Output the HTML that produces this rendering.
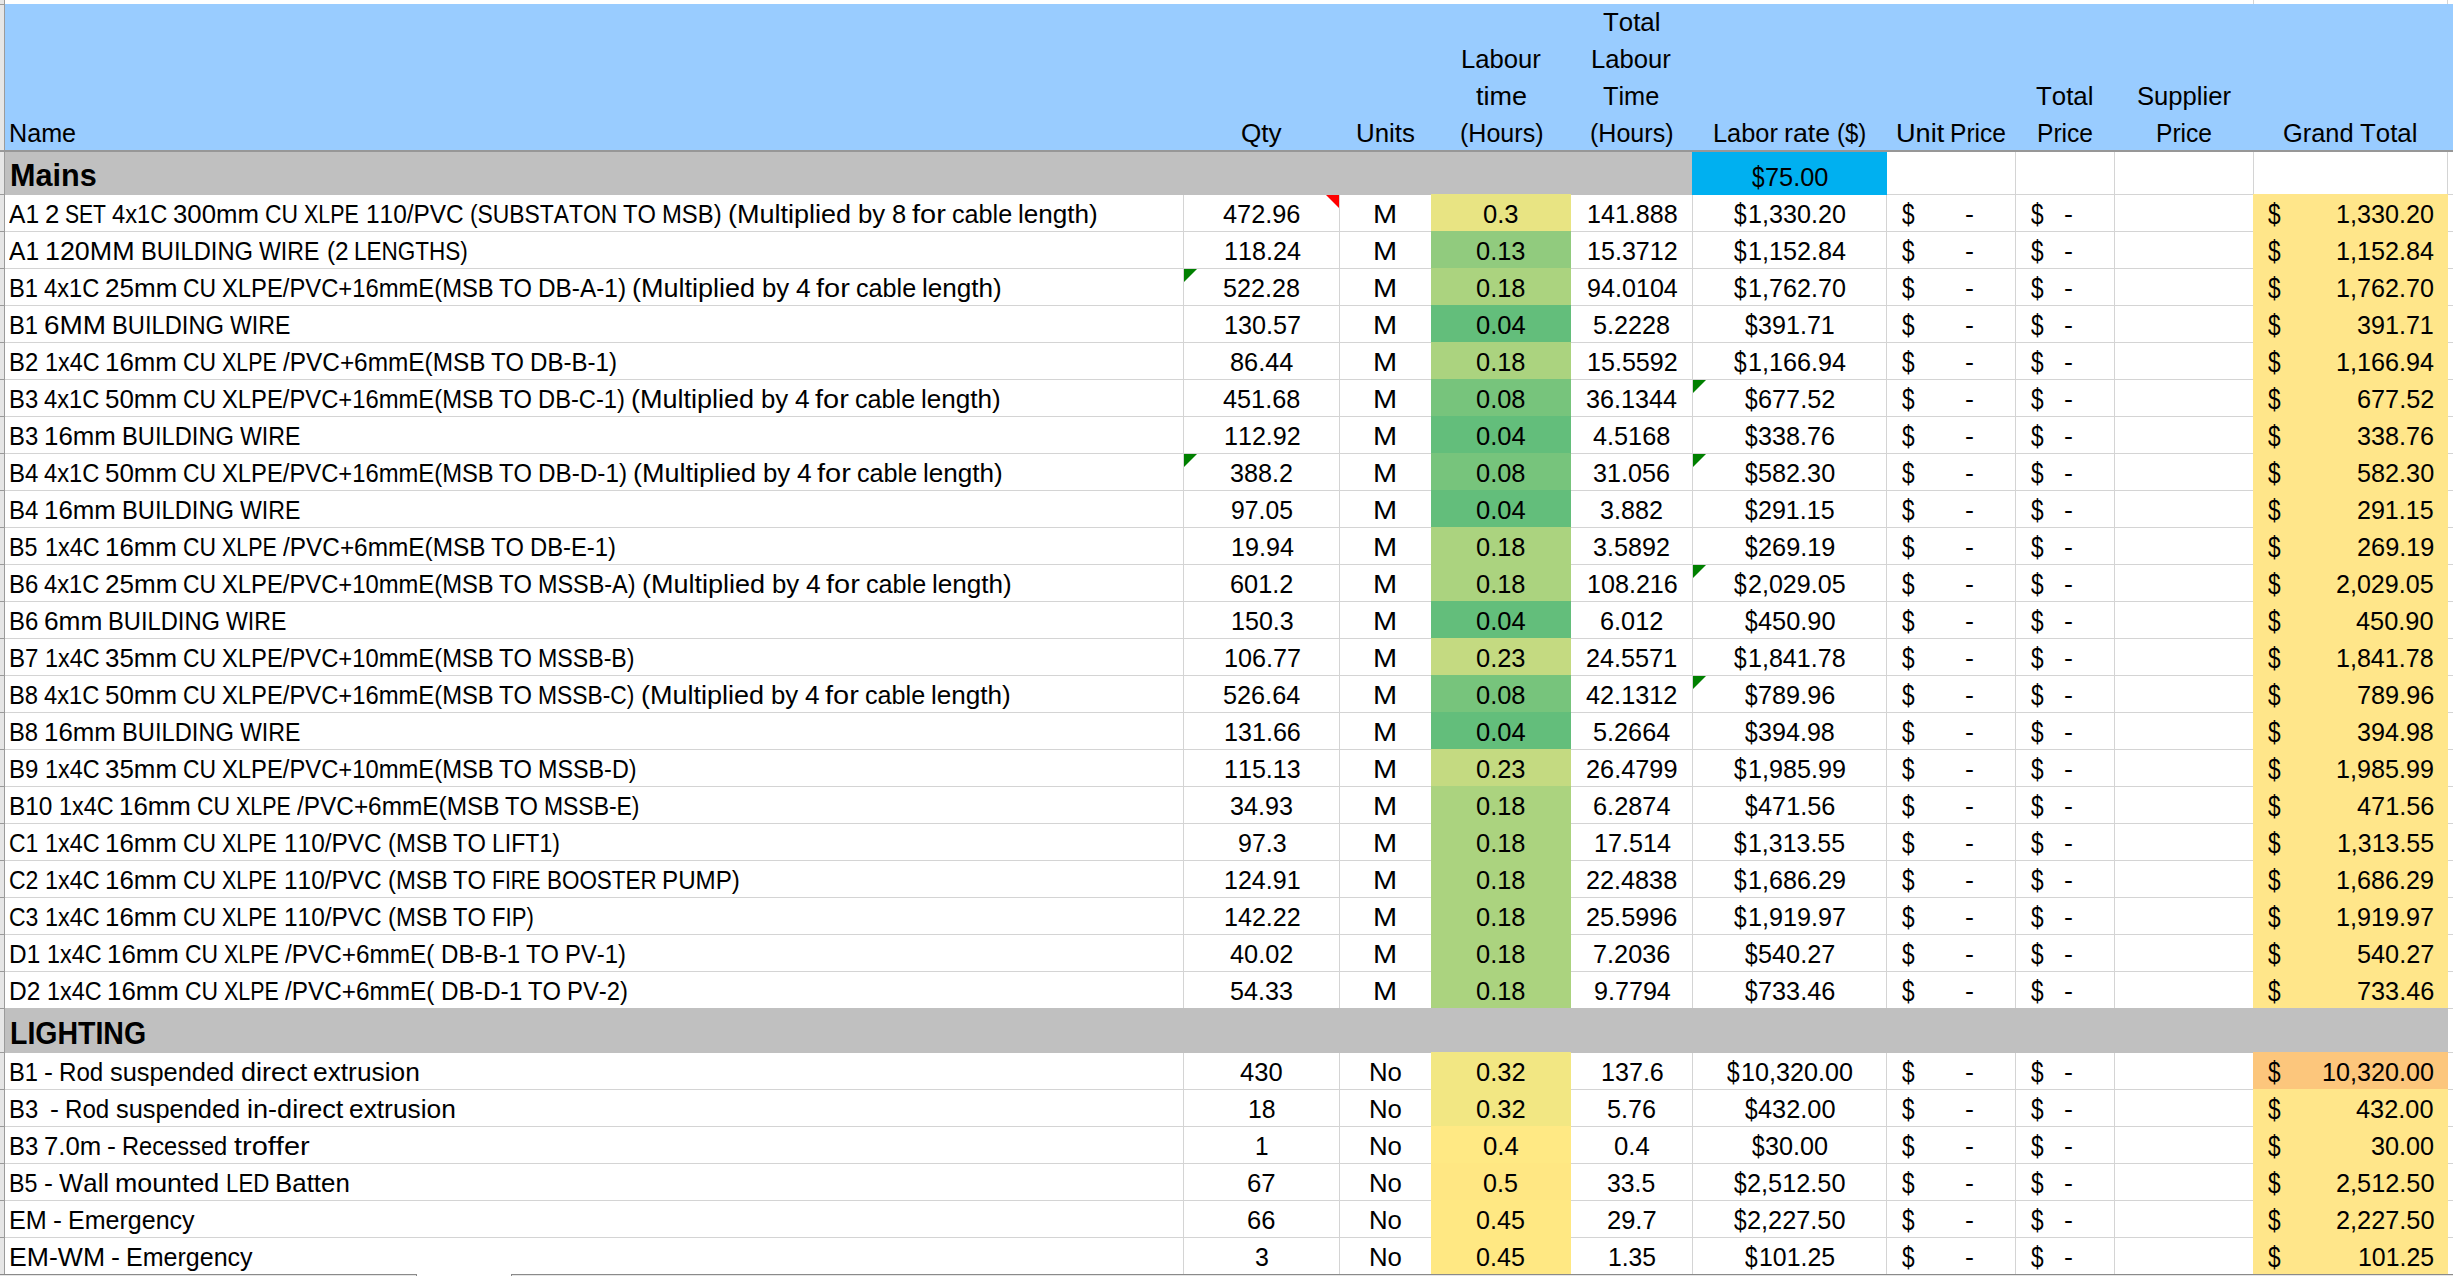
<!DOCTYPE html><html><head><meta charset="utf-8"><style>
html,body{margin:0;padding:0;}body{width:2453px;height:1276px;overflow:hidden;position:relative;background:#fff;font-family:"Liberation Sans",sans-serif;color:#000}
.r{position:absolute}
.t{position:absolute;white-space:pre;font-kerning:none;font-variant-ligatures:none;font-size:25.5px;line-height:40px;height:40px;transform-origin:0 0}
.b{font-weight:bold;font-size:30.5px}
.tri{position:absolute;width:0;height:0}
</style></head><body>
<div class="r" style="left:0px;top:0px;width:4px;height:1276px;background:#e6e6e6"></div>
<div class="r" style="left:4px;top:0px;width:1px;height:1276px;background:#9b9b9b"></div>
<div class="r" style="left:5px;top:4px;width:2448px;height:146px;background:#99ccff"></div>
<div class="r" style="left:0px;top:150px;width:2453px;height:2px;background:#979797"></div>
<div class="r" style="left:1183px;top:152px;width:1px;height:1124px;background:#d4d4d4"></div>
<div class="r" style="left:1339px;top:152px;width:1px;height:1124px;background:#d4d4d4"></div>
<div class="r" style="left:1431px;top:152px;width:1px;height:1124px;background:#d4d4d4"></div>
<div class="r" style="left:1570px;top:152px;width:1px;height:1124px;background:#d4d4d4"></div>
<div class="r" style="left:1692px;top:152px;width:1px;height:1124px;background:#d4d4d4"></div>
<div class="r" style="left:1886px;top:152px;width:1px;height:1124px;background:#d4d4d4"></div>
<div class="r" style="left:2015px;top:152px;width:1px;height:1124px;background:#d4d4d4"></div>
<div class="r" style="left:2114px;top:152px;width:1px;height:1124px;background:#d4d4d4"></div>
<div class="r" style="left:2253px;top:152px;width:1px;height:1124px;background:#d4d4d4"></div>
<div class="r" style="left:2447px;top:152px;width:1px;height:1124px;background:#d4d4d4"></div>
<div class="r" style="left:2253px;top:0px;width:1px;height:4px;background:#d4d4d4"></div>
<div class="r" style="left:2447px;top:0px;width:1px;height:4px;background:#d4d4d4"></div>
<div class="r" style="left:5px;top:194px;width:2448px;height:1px;background:#d4d4d4"></div>
<div class="r" style="left:5px;top:231px;width:2448px;height:1px;background:#d4d4d4"></div>
<div class="r" style="left:5px;top:268px;width:2448px;height:1px;background:#d4d4d4"></div>
<div class="r" style="left:5px;top:305px;width:2448px;height:1px;background:#d4d4d4"></div>
<div class="r" style="left:5px;top:342px;width:2448px;height:1px;background:#d4d4d4"></div>
<div class="r" style="left:5px;top:379px;width:2448px;height:1px;background:#d4d4d4"></div>
<div class="r" style="left:5px;top:416px;width:2448px;height:1px;background:#d4d4d4"></div>
<div class="r" style="left:5px;top:453px;width:2448px;height:1px;background:#d4d4d4"></div>
<div class="r" style="left:5px;top:490px;width:2448px;height:1px;background:#d4d4d4"></div>
<div class="r" style="left:5px;top:527px;width:2448px;height:1px;background:#d4d4d4"></div>
<div class="r" style="left:5px;top:564px;width:2448px;height:1px;background:#d4d4d4"></div>
<div class="r" style="left:5px;top:601px;width:2448px;height:1px;background:#d4d4d4"></div>
<div class="r" style="left:5px;top:638px;width:2448px;height:1px;background:#d4d4d4"></div>
<div class="r" style="left:5px;top:675px;width:2448px;height:1px;background:#d4d4d4"></div>
<div class="r" style="left:5px;top:712px;width:2448px;height:1px;background:#d4d4d4"></div>
<div class="r" style="left:5px;top:749px;width:2448px;height:1px;background:#d4d4d4"></div>
<div class="r" style="left:5px;top:786px;width:2448px;height:1px;background:#d4d4d4"></div>
<div class="r" style="left:5px;top:823px;width:2448px;height:1px;background:#d4d4d4"></div>
<div class="r" style="left:5px;top:860px;width:2448px;height:1px;background:#d4d4d4"></div>
<div class="r" style="left:5px;top:897px;width:2448px;height:1px;background:#d4d4d4"></div>
<div class="r" style="left:5px;top:934px;width:2448px;height:1px;background:#d4d4d4"></div>
<div class="r" style="left:5px;top:971px;width:2448px;height:1px;background:#d4d4d4"></div>
<div class="r" style="left:5px;top:1008px;width:2448px;height:1px;background:#d4d4d4"></div>
<div class="r" style="left:5px;top:1052px;width:2448px;height:1px;background:#d4d4d4"></div>
<div class="r" style="left:5px;top:1089px;width:2448px;height:1px;background:#d4d4d4"></div>
<div class="r" style="left:5px;top:1126px;width:2448px;height:1px;background:#d4d4d4"></div>
<div class="r" style="left:5px;top:1163px;width:2448px;height:1px;background:#d4d4d4"></div>
<div class="r" style="left:5px;top:1200px;width:2448px;height:1px;background:#d4d4d4"></div>
<div class="r" style="left:5px;top:1237px;width:2448px;height:1px;background:#d4d4d4"></div>
<div class="r" style="left:5px;top:1274px;width:2448px;height:1px;background:#d4d4d4"></div>
<div class="r" style="left:0;top:4px;width:4px;height:1px;background:#9b9b9b"></div>
<div class="r" style="left:0;top:150px;width:4px;height:1px;background:#9b9b9b"></div>
<div class="r" style="left:0;top:194px;width:4px;height:1px;background:#9b9b9b"></div>
<div class="r" style="left:0;top:231px;width:4px;height:1px;background:#9b9b9b"></div>
<div class="r" style="left:0;top:268px;width:4px;height:1px;background:#9b9b9b"></div>
<div class="r" style="left:0;top:305px;width:4px;height:1px;background:#9b9b9b"></div>
<div class="r" style="left:0;top:342px;width:4px;height:1px;background:#9b9b9b"></div>
<div class="r" style="left:0;top:379px;width:4px;height:1px;background:#9b9b9b"></div>
<div class="r" style="left:0;top:416px;width:4px;height:1px;background:#9b9b9b"></div>
<div class="r" style="left:0;top:453px;width:4px;height:1px;background:#9b9b9b"></div>
<div class="r" style="left:0;top:490px;width:4px;height:1px;background:#9b9b9b"></div>
<div class="r" style="left:0;top:527px;width:4px;height:1px;background:#9b9b9b"></div>
<div class="r" style="left:0;top:564px;width:4px;height:1px;background:#9b9b9b"></div>
<div class="r" style="left:0;top:601px;width:4px;height:1px;background:#9b9b9b"></div>
<div class="r" style="left:0;top:638px;width:4px;height:1px;background:#9b9b9b"></div>
<div class="r" style="left:0;top:675px;width:4px;height:1px;background:#9b9b9b"></div>
<div class="r" style="left:0;top:712px;width:4px;height:1px;background:#9b9b9b"></div>
<div class="r" style="left:0;top:749px;width:4px;height:1px;background:#9b9b9b"></div>
<div class="r" style="left:0;top:786px;width:4px;height:1px;background:#9b9b9b"></div>
<div class="r" style="left:0;top:823px;width:4px;height:1px;background:#9b9b9b"></div>
<div class="r" style="left:0;top:860px;width:4px;height:1px;background:#9b9b9b"></div>
<div class="r" style="left:0;top:897px;width:4px;height:1px;background:#9b9b9b"></div>
<div class="r" style="left:0;top:934px;width:4px;height:1px;background:#9b9b9b"></div>
<div class="r" style="left:0;top:971px;width:4px;height:1px;background:#9b9b9b"></div>
<div class="r" style="left:0;top:1008px;width:4px;height:1px;background:#9b9b9b"></div>
<div class="r" style="left:0;top:1052px;width:4px;height:1px;background:#9b9b9b"></div>
<div class="r" style="left:0;top:1089px;width:4px;height:1px;background:#9b9b9b"></div>
<div class="r" style="left:0;top:1126px;width:4px;height:1px;background:#9b9b9b"></div>
<div class="r" style="left:0;top:1163px;width:4px;height:1px;background:#9b9b9b"></div>
<div class="r" style="left:0;top:1200px;width:4px;height:1px;background:#9b9b9b"></div>
<div class="r" style="left:0;top:1237px;width:4px;height:1px;background:#9b9b9b"></div>
<div class="r" style="left:0;top:1274px;width:4px;height:1px;background:#9b9b9b"></div>
<div class="r" style="left:5px;top:152px;width:1688px;height:43px;background:#c0c0c0"></div>
<div class="r" style="left:1692px;top:152px;width:195px;height:43px;background:#00b0f0"></div>
<div class="r" style="left:1431px;top:194px;width:140px;height:38px;background:#e8e483"></div>
<div class="r" style="left:2253px;top:194px;width:195px;height:38px;background:#ffe68a"></div>
<div class="r" style="left:1431px;top:231px;width:140px;height:38px;background:#91cb7e"></div>
<div class="r" style="left:2253px;top:231px;width:195px;height:38px;background:#ffe68a"></div>
<div class="r" style="left:1431px;top:268px;width:140px;height:38px;background:#abd37f"></div>
<div class="r" style="left:2253px;top:268px;width:195px;height:38px;background:#ffe68a"></div>
<div class="r" style="left:1431px;top:305px;width:140px;height:38px;background:#63be7b"></div>
<div class="r" style="left:2253px;top:305px;width:195px;height:38px;background:#ffe68a"></div>
<div class="r" style="left:1431px;top:342px;width:140px;height:38px;background:#abd37f"></div>
<div class="r" style="left:2253px;top:342px;width:195px;height:38px;background:#ffe68a"></div>
<div class="r" style="left:1431px;top:379px;width:140px;height:38px;background:#77c47c"></div>
<div class="r" style="left:2253px;top:379px;width:195px;height:38px;background:#ffe68a"></div>
<div class="r" style="left:1431px;top:416px;width:140px;height:38px;background:#63be7b"></div>
<div class="r" style="left:2253px;top:416px;width:195px;height:38px;background:#ffe68a"></div>
<div class="r" style="left:1431px;top:453px;width:140px;height:38px;background:#77c47c"></div>
<div class="r" style="left:2253px;top:453px;width:195px;height:38px;background:#ffe68a"></div>
<div class="r" style="left:1431px;top:490px;width:140px;height:38px;background:#63be7b"></div>
<div class="r" style="left:2253px;top:490px;width:195px;height:38px;background:#ffe68a"></div>
<div class="r" style="left:1431px;top:527px;width:140px;height:38px;background:#abd37f"></div>
<div class="r" style="left:2253px;top:527px;width:195px;height:38px;background:#ffe68a"></div>
<div class="r" style="left:1431px;top:564px;width:140px;height:38px;background:#abd37f"></div>
<div class="r" style="left:2253px;top:564px;width:195px;height:38px;background:#ffe68a"></div>
<div class="r" style="left:1431px;top:601px;width:140px;height:38px;background:#63be7b"></div>
<div class="r" style="left:2253px;top:601px;width:195px;height:38px;background:#ffe68a"></div>
<div class="r" style="left:1431px;top:638px;width:140px;height:38px;background:#c4da81"></div>
<div class="r" style="left:2253px;top:638px;width:195px;height:38px;background:#ffe68a"></div>
<div class="r" style="left:1431px;top:675px;width:140px;height:38px;background:#77c47c"></div>
<div class="r" style="left:2253px;top:675px;width:195px;height:38px;background:#ffe68a"></div>
<div class="r" style="left:1431px;top:712px;width:140px;height:38px;background:#63be7b"></div>
<div class="r" style="left:2253px;top:712px;width:195px;height:38px;background:#ffe68a"></div>
<div class="r" style="left:1431px;top:749px;width:140px;height:38px;background:#c4da81"></div>
<div class="r" style="left:2253px;top:749px;width:195px;height:38px;background:#ffe68a"></div>
<div class="r" style="left:1431px;top:786px;width:140px;height:38px;background:#abd37f"></div>
<div class="r" style="left:2253px;top:786px;width:195px;height:38px;background:#ffe68a"></div>
<div class="r" style="left:1431px;top:823px;width:140px;height:38px;background:#abd37f"></div>
<div class="r" style="left:2253px;top:823px;width:195px;height:38px;background:#ffe68a"></div>
<div class="r" style="left:1431px;top:860px;width:140px;height:38px;background:#abd37f"></div>
<div class="r" style="left:2253px;top:860px;width:195px;height:38px;background:#ffe68a"></div>
<div class="r" style="left:1431px;top:897px;width:140px;height:38px;background:#abd37f"></div>
<div class="r" style="left:2253px;top:897px;width:195px;height:38px;background:#ffe68a"></div>
<div class="r" style="left:1431px;top:934px;width:140px;height:38px;background:#abd37f"></div>
<div class="r" style="left:2253px;top:934px;width:195px;height:38px;background:#ffe68a"></div>
<div class="r" style="left:1431px;top:971px;width:140px;height:38px;background:#abd37f"></div>
<div class="r" style="left:2253px;top:971px;width:195px;height:38px;background:#ffe68a"></div>
<div class="r" style="left:5px;top:1008px;width:2443px;height:45px;background:#c0c0c0"></div>
<div class="r" style="left:1431px;top:1052px;width:140px;height:38px;background:#f2e783"></div>
<div class="r" style="left:2253px;top:1052px;width:195px;height:38px;background:#fcc67c"></div>
<div class="r" style="left:1431px;top:1089px;width:140px;height:38px;background:#f2e783"></div>
<div class="r" style="left:2253px;top:1089px;width:195px;height:38px;background:#ffe68a"></div>
<div class="r" style="left:1431px;top:1126px;width:140px;height:38px;background:#ffe984"></div>
<div class="r" style="left:2253px;top:1126px;width:195px;height:38px;background:#ffe68a"></div>
<div class="r" style="left:1431px;top:1163px;width:140px;height:38px;background:#ffe783"></div>
<div class="r" style="left:2253px;top:1163px;width:195px;height:38px;background:#ffe68a"></div>
<div class="r" style="left:1431px;top:1200px;width:140px;height:38px;background:#ffe883"></div>
<div class="r" style="left:2253px;top:1200px;width:195px;height:38px;background:#ffe68a"></div>
<div class="r" style="left:1431px;top:1237px;width:140px;height:38px;background:#ffe883"></div>
<div class="r" style="left:2253px;top:1237px;width:195px;height:38px;background:#ffe68a"></div>
<div class="r" style="left:0;top:1274px;width:417px;height:1px;background:#8a8a8a"></div>
<div class="r" style="left:511px;top:1274px;width:1942px;height:1px;background:#8a8a8a"></div>
<div class="r" style="left:0;top:1275px;width:417px;height:1px;background:#e6e6e6"></div>
<div class="r" style="left:511px;top:1275px;width:1942px;height:1px;background:#e6e6e6"></div>
<div class="r" style="left:417px;top:1274px;width:94px;height:2px;background:#fff"></div>
<div class="r" style="left:416px;top:1274px;width:1px;height:2px;background:#8a8a8a"></div>
<div class="r" style="left:511px;top:1274px;width:1px;height:2px;background:#8a8a8a"></div>
<div class="tri" style="left:1326px;top:195px;border-top:13px solid #ff0000;border-left:13px solid transparent"></div>
<div class="tri" style="left:1184px;top:269px;border-top:13px solid #008000;border-right:13px solid transparent"></div>
<div class="tri" style="left:1184px;top:454px;border-top:13px solid #008000;border-right:13px solid transparent"></div>
<div class="tri" style="left:1693px;top:380px;border-top:13px solid #008000;border-right:13px solid transparent"></div>
<div class="tri" style="left:1693px;top:454px;border-top:13px solid #008000;border-right:13px solid transparent"></div>
<div class="tri" style="left:1693px;top:565px;border-top:13px solid #008000;border-right:13px solid transparent"></div>
<div class="tri" style="left:1693px;top:676px;border-top:13px solid #008000;border-right:13px solid transparent"></div>
<div class="t" style="left:8.96px;top:113.16px;transform:scaleX(0.9861)">Name</div>
<div class="t" style="left:1240.90px;top:113.16px;transform:scaleX(1.0244)">Qty</div>
<div class="t" style="left:1355.92px;top:113.16px;transform:scaleX(1.0160)">Units</div>
<div class="t" style="left:1460.78px;top:39.16px;transform:scaleX(1.0058)">Labour</div>
<div class="t" style="left:1475.56px;top:76.16px;transform:scaleX(1.0600)">time</div>
<div class="t" style="left:1459.50px;top:113.16px;transform:scaleX(0.9822)">(Hours)</div>
<div class="t" style="left:1602.75px;top:2.16px;transform:scaleX(1.0124)">Total</div>
<div class="t" style="left:1591.28px;top:39.16px;transform:scaleX(1.0058)">Labour</div>
<div class="t" style="left:1603.26px;top:76.16px;transform:scaleX(0.9933)">Time</div>
<div class="t" style="left:1590.00px;top:113.16px;transform:scaleX(0.9822)">(Hours)</div>
<div class="t" style="left:1712.81px;top:113.16px;transform:scaleX(0.9940)">Labor</div>
<div class="t" style="left:1784.01px;top:113.16px;transform:scaleX(1.0490)">rate</div>
<div class="t" style="left:1836.56px;top:113.16px;transform:scaleX(0.9424)">($)</div>
<div class="t" style="left:1895.82px;top:113.16px;transform:scaleX(1.0644)">Unit</div>
<div class="t" style="left:1949.99px;top:113.16px;transform:scaleX(0.9642)">Price</div>
<div class="t" style="left:2036.25px;top:76.16px;transform:scaleX(1.0124)">Total</div>
<div class="t" style="left:2036.99px;top:113.16px;transform:scaleX(0.9642)">Price</div>
<div class="t" style="left:2136.59px;top:76.16px;transform:scaleX(1.0053)">Supplier</div>
<div class="t" style="left:2155.99px;top:113.16px;transform:scaleX(0.9642)">Price</div>
<div class="t" style="left:2283.28px;top:113.16px;transform:scaleX(0.9962)">Grand</div>
<div class="t" style="left:2360.25px;top:113.16px;transform:scaleX(1.0124)">Total</div>
<div class="t b" style="left:9.96px;top:154.80px;transform:scaleX(1.0030)">Mains</div>
<div class="t" style="left:1751.79px;top:158.16px;transform-origin:0 28.84px;transform:scale(0.8882,1.163)">$</div>
<div class="t" style="left:1765.04px;top:157.16px;transform:scaleX(0.9938)">75.00</div>
<div class="t b" style="left:9.59px;top:1012.80px;transform:scaleX(0.9341)">LIGHTING</div>
<div class="t" style="left:9.06px;top:194.16px;transform:scaleX(0.9642)">A1</div>
<div class="t" style="left:44.96px;top:194.16px;transform:scaleX(1.0109)">2</div>
<div class="t" style="left:64.79px;top:194.16px;transform:scaleX(0.8268)">SET</div>
<div class="t" style="left:111.93px;top:194.16px;transform:scaleX(0.9298)">4x1C</div>
<div class="t" style="left:173.32px;top:194.16px;transform:scaleX(1.0109)">300mm</div>
<div class="t" style="left:264.75px;top:194.16px;transform:scaleX(0.8977)">CU</div>
<div class="t" style="left:303.67px;top:194.16px;transform:scaleX(0.8396)">XLPE</div>
<div class="t" style="left:365.56px;top:194.16px;transform:scaleX(0.9578)">110/PVC</div>
<div class="t" style="left:469.63px;top:194.16px;transform:scaleX(0.8962)">(SUBSTATON</div>
<div class="t" style="left:622.80px;top:194.16px;transform:scaleX(0.9289)">TO</div>
<div class="t" style="left:662.33px;top:194.16px;transform:scaleX(0.9347)">MSB)</div>
<div class="t" style="left:728.38px;top:194.16px;transform:scaleX(1.0594)">(Multiplied</div>
<div class="t" style="left:858.31px;top:194.16px;transform:scaleX(1.0109)">by</div>
<div class="t" style="left:892.01px;top:194.16px;transform:scaleX(0.9986)">8</div>
<div class="t" style="left:911.92px;top:194.16px;transform:scaleX(1.1350)">for</div>
<div class="t" style="left:951.87px;top:194.16px;transform:scaleX(0.9869)">cable</div>
<div class="t" style="left:1018.25px;top:194.16px;transform:scaleX(1.0236)">length)</div>
<div class="t" style="left:1222.90px;top:194.16px;transform:scaleX(0.9928)">472.96</div>
<div class="t" style="left:1373.41px;top:194.16px;transform:scaleX(1.1357)">M</div>
<div class="t" style="left:1483.23px;top:194.16px;transform:scaleX(1.0021)">0.3</div>
<div class="t" style="left:1586.51px;top:194.16px;transform:scaleX(0.9834)">141.888</div>
<div class="t" style="left:1734.29px;top:195.16px;transform-origin:0 28.84px;transform:scale(0.8882,1.163)">$</div>
<div class="t" style="left:1748.00px;top:194.16px;transform:scaleX(0.9868)">1,330.20</div>
<div class="t" style="left:1902.21px;top:195.16px;transform-origin:0 28.84px;transform:scale(0.8882,1.163)">$</div>
<div class="t" style="left:1965.28px;top:194.16px;transform:scaleX(1.0497)">-</div>
<div class="t" style="left:2031.21px;top:195.16px;transform-origin:0 28.84px;transform:scale(0.8882,1.163)">$</div>
<div class="t" style="left:2064.28px;top:194.16px;transform:scaleX(1.0497)">-</div>
<div class="t" style="left:2268.21px;top:195.16px;transform-origin:0 28.84px;transform:scale(0.8882,1.163)">$</div>
<div class="t" style="left:2336.04px;top:194.16px;transform:scaleX(0.9868)">1,330.20</div>
<div class="t" style="left:9.06px;top:231.16px;transform:scaleX(0.9642)">A1</div>
<div class="t" style="left:45.38px;top:231.16px;transform:scaleX(1.0524)">120MM</div>
<div class="t" style="left:141.02px;top:231.16px;transform:scaleX(0.9295)">BUILDING</div>
<div class="t" style="left:259.06px;top:231.16px;transform:scaleX(0.9077)">WIRE</div>
<div class="t" style="left:326.54px;top:231.16px;transform:scaleX(0.9567)">(2</div>
<div class="t" style="left:354.04px;top:231.16px;transform:scaleX(0.8826)">LENGTHS)</div>
<div class="t" style="left:1223.50px;top:231.16px;transform:scaleX(0.9867)">118.24</div>
<div class="t" style="left:1373.41px;top:231.16px;transform:scaleX(1.1357)">M</div>
<div class="t" style="left:1476.23px;top:231.16px;transform:scaleX(0.9976)">0.13</div>
<div class="t" style="left:1586.51px;top:231.16px;transform:scaleX(0.9846)">15.3712</div>
<div class="t" style="left:1734.29px;top:232.16px;transform-origin:0 28.84px;transform:scale(0.8882,1.163)">$</div>
<div class="t" style="left:1748.00px;top:231.16px;transform:scaleX(0.9869)">1,152.84</div>
<div class="t" style="left:1902.21px;top:232.16px;transform-origin:0 28.84px;transform:scale(0.8882,1.163)">$</div>
<div class="t" style="left:1965.28px;top:231.16px;transform:scaleX(1.0497)">-</div>
<div class="t" style="left:2031.21px;top:232.16px;transform-origin:0 28.84px;transform:scale(0.8882,1.163)">$</div>
<div class="t" style="left:2064.28px;top:231.16px;transform:scaleX(1.0497)">-</div>
<div class="t" style="left:2268.21px;top:232.16px;transform-origin:0 28.84px;transform:scale(0.8882,1.163)">$</div>
<div class="t" style="left:2335.78px;top:231.16px;transform:scaleX(0.9869)">1,152.84</div>
<div class="t" style="left:9.02px;top:268.16px;transform:scaleX(0.9322)">B1</div>
<div class="t" style="left:43.93px;top:268.16px;transform:scaleX(0.9298)">4x1C</div>
<div class="t" style="left:104.95px;top:268.16px;transform:scaleX(1.0211)">25mm</div>
<div class="t" style="left:182.75px;top:268.16px;transform:scaleX(0.8977)">CU</div>
<div class="t" style="left:221.62px;top:268.16px;transform:scaleX(0.9329)">XLPE/PVC+16mmE(MSB</div>
<div class="t" style="left:498.80px;top:268.16px;transform:scaleX(0.9289)">TO</div>
<div class="t" style="left:537.90px;top:268.16px;transform:scaleX(0.9562)">DB-A-1)</div>
<div class="t" style="left:632.38px;top:268.16px;transform:scaleX(1.0594)">(Multiplied</div>
<div class="t" style="left:762.31px;top:268.16px;transform:scaleX(1.0109)">by</div>
<div class="t" style="left:795.88px;top:268.16px;transform:scaleX(1.0310)">4</div>
<div class="t" style="left:815.92px;top:268.16px;transform:scaleX(1.1350)">for</div>
<div class="t" style="left:855.87px;top:268.16px;transform:scaleX(0.9869)">cable</div>
<div class="t" style="left:922.25px;top:268.16px;transform:scaleX(1.0236)">length)</div>
<div class="t" style="left:1223.26px;top:268.16px;transform:scaleX(0.9859)">522.28</div>
<div class="t" style="left:1373.41px;top:268.16px;transform:scaleX(1.1357)">M</div>
<div class="t" style="left:1476.23px;top:268.16px;transform:scaleX(0.9962)">0.18</div>
<div class="t" style="left:1586.61px;top:268.16px;transform:scaleX(0.9856)">94.0104</div>
<div class="t" style="left:1734.29px;top:269.16px;transform-origin:0 28.84px;transform:scale(0.8882,1.163)">$</div>
<div class="t" style="left:1748.00px;top:268.16px;transform:scaleX(0.9868)">1,762.70</div>
<div class="t" style="left:1902.21px;top:269.16px;transform-origin:0 28.84px;transform:scale(0.8882,1.163)">$</div>
<div class="t" style="left:1965.28px;top:268.16px;transform:scaleX(1.0497)">-</div>
<div class="t" style="left:2031.21px;top:269.16px;transform-origin:0 28.84px;transform:scale(0.8882,1.163)">$</div>
<div class="t" style="left:2064.28px;top:268.16px;transform:scaleX(1.0497)">-</div>
<div class="t" style="left:2268.21px;top:269.16px;transform-origin:0 28.84px;transform:scale(0.8882,1.163)">$</div>
<div class="t" style="left:2336.04px;top:268.16px;transform:scaleX(0.9868)">1,762.70</div>
<div class="t" style="left:9.02px;top:305.16px;transform:scaleX(0.9322)">B1</div>
<div class="t" style="left:43.84px;top:305.16px;transform:scaleX(1.0961)">6MM</div>
<div class="t" style="left:112.02px;top:305.16px;transform:scaleX(0.9295)">BUILDING</div>
<div class="t" style="left:230.06px;top:305.16px;transform:scaleX(0.9077)">WIRE</div>
<div class="t" style="left:1223.50px;top:305.16px;transform:scaleX(0.9880)">130.57</div>
<div class="t" style="left:1373.41px;top:305.16px;transform:scaleX(1.1357)">M</div>
<div class="t" style="left:1476.23px;top:305.16px;transform:scaleX(1.0024)">0.04</div>
<div class="t" style="left:1593.26px;top:305.16px;transform:scaleX(0.9859)">5.2228</div>
<div class="t" style="left:1744.79px;top:306.16px;transform-origin:0 28.84px;transform:scale(0.8882,1.163)">$</div>
<div class="t" style="left:1758.34px;top:305.16px;transform:scaleX(0.9849)">391.71</div>
<div class="t" style="left:1902.21px;top:306.16px;transform-origin:0 28.84px;transform:scale(0.8882,1.163)">$</div>
<div class="t" style="left:1965.28px;top:305.16px;transform:scaleX(1.0497)">-</div>
<div class="t" style="left:2031.21px;top:306.16px;transform-origin:0 28.84px;transform:scale(0.8882,1.163)">$</div>
<div class="t" style="left:2064.28px;top:305.16px;transform:scaleX(1.0497)">-</div>
<div class="t" style="left:2268.21px;top:306.16px;transform-origin:0 28.84px;transform:scale(0.8882,1.163)">$</div>
<div class="t" style="left:2357.41px;top:305.16px;transform:scaleX(0.9849)">391.71</div>
<div class="t" style="left:9.01px;top:342.16px;transform:scaleX(0.9359)">B2</div>
<div class="t" style="left:44.64px;top:342.16px;transform:scaleX(0.9178)">1x4C</div>
<div class="t" style="left:105.45px;top:342.16px;transform:scaleX(1.0139)">16mm</div>
<div class="t" style="left:182.75px;top:342.16px;transform:scaleX(0.8977)">CU</div>
<div class="t" style="left:221.67px;top:342.16px;transform:scaleX(0.8396)">XLPE</div>
<div class="t" style="left:282.84px;top:342.16px;transform:scaleX(0.9558)">/PVC+6mmE(MSB</div>
<div class="t" style="left:490.80px;top:342.16px;transform:scaleX(0.9289)">TO</div>
<div class="t" style="left:529.92px;top:342.16px;transform:scaleX(0.9448)">DB-B-1)</div>
<div class="t" style="left:1230.02px;top:342.16px;transform:scaleX(0.9943)">86.44</div>
<div class="t" style="left:1373.41px;top:342.16px;transform:scaleX(1.1357)">M</div>
<div class="t" style="left:1476.23px;top:342.16px;transform:scaleX(0.9962)">0.18</div>
<div class="t" style="left:1586.51px;top:342.16px;transform:scaleX(0.9846)">15.5592</div>
<div class="t" style="left:1734.29px;top:343.16px;transform-origin:0 28.84px;transform:scale(0.8882,1.163)">$</div>
<div class="t" style="left:1748.00px;top:342.16px;transform:scaleX(0.9869)">1,166.94</div>
<div class="t" style="left:1902.21px;top:343.16px;transform-origin:0 28.84px;transform:scale(0.8882,1.163)">$</div>
<div class="t" style="left:1965.28px;top:342.16px;transform:scaleX(1.0497)">-</div>
<div class="t" style="left:2031.21px;top:343.16px;transform-origin:0 28.84px;transform:scale(0.8882,1.163)">$</div>
<div class="t" style="left:2064.28px;top:342.16px;transform:scaleX(1.0497)">-</div>
<div class="t" style="left:2268.21px;top:343.16px;transform-origin:0 28.84px;transform:scale(0.8882,1.163)">$</div>
<div class="t" style="left:2335.78px;top:342.16px;transform:scaleX(0.9869)">1,166.94</div>
<div class="t" style="left:9.01px;top:379.16px;transform:scaleX(0.9349)">B3</div>
<div class="t" style="left:43.93px;top:379.16px;transform:scaleX(0.9298)">4x1C</div>
<div class="t" style="left:105.23px;top:379.16px;transform:scaleX(1.0170)">50mm</div>
<div class="t" style="left:182.75px;top:379.16px;transform:scaleX(0.8977)">CU</div>
<div class="t" style="left:221.62px;top:379.16px;transform:scaleX(0.9329)">XLPE/PVC+16mmE(MSB</div>
<div class="t" style="left:498.80px;top:379.16px;transform:scaleX(0.9289)">TO</div>
<div class="t" style="left:537.95px;top:379.16px;transform:scaleX(0.9300)">DB-C-1)</div>
<div class="t" style="left:631.38px;top:379.16px;transform:scaleX(1.0594)">(Multiplied</div>
<div class="t" style="left:761.31px;top:379.16px;transform:scaleX(1.0109)">by</div>
<div class="t" style="left:794.88px;top:379.16px;transform:scaleX(1.0310)">4</div>
<div class="t" style="left:814.92px;top:379.16px;transform:scaleX(1.1350)">for</div>
<div class="t" style="left:854.87px;top:379.16px;transform:scaleX(0.9869)">cable</div>
<div class="t" style="left:921.25px;top:379.16px;transform:scaleX(1.0236)">length)</div>
<div class="t" style="left:1222.90px;top:379.16px;transform:scaleX(0.9907)">451.68</div>
<div class="t" style="left:1373.41px;top:379.16px;transform:scaleX(1.1357)">M</div>
<div class="t" style="left:1476.23px;top:379.16px;transform:scaleX(0.9962)">0.08</div>
<div class="t" style="left:1586.34px;top:379.16px;transform:scaleX(0.9886)">36.1344</div>
<div class="t" style="left:1744.79px;top:380.16px;transform-origin:0 28.84px;transform:scale(0.8882,1.163)">$</div>
<div class="t" style="left:1757.97px;top:379.16px;transform:scaleX(0.9911)">677.52</div>
<div class="t" style="left:1902.21px;top:380.16px;transform-origin:0 28.84px;transform:scale(0.8882,1.163)">$</div>
<div class="t" style="left:1965.28px;top:379.16px;transform:scaleX(1.0497)">-</div>
<div class="t" style="left:2031.21px;top:380.16px;transform-origin:0 28.84px;transform:scale(0.8882,1.163)">$</div>
<div class="t" style="left:2064.28px;top:379.16px;transform:scaleX(1.0497)">-</div>
<div class="t" style="left:2268.21px;top:380.16px;transform-origin:0 28.84px;transform:scale(0.8882,1.163)">$</div>
<div class="t" style="left:2356.97px;top:379.16px;transform:scaleX(0.9911)">677.52</div>
<div class="t" style="left:9.01px;top:416.16px;transform:scaleX(0.9349)">B3</div>
<div class="t" style="left:44.45px;top:416.16px;transform:scaleX(1.0139)">16mm</div>
<div class="t" style="left:122.02px;top:416.16px;transform:scaleX(0.9295)">BUILDING</div>
<div class="t" style="left:240.06px;top:416.16px;transform:scaleX(0.9077)">WIRE</div>
<div class="t" style="left:1223.51px;top:416.16px;transform:scaleX(0.9841)">112.92</div>
<div class="t" style="left:1373.41px;top:416.16px;transform:scaleX(1.1357)">M</div>
<div class="t" style="left:1476.23px;top:416.16px;transform:scaleX(1.0024)">0.04</div>
<div class="t" style="left:1592.90px;top:416.16px;transform:scaleX(0.9907)">4.5168</div>
<div class="t" style="left:1744.79px;top:417.16px;transform-origin:0 28.84px;transform:scale(0.8882,1.163)">$</div>
<div class="t" style="left:1758.34px;top:416.16px;transform:scaleX(0.9871)">338.76</div>
<div class="t" style="left:1902.21px;top:417.16px;transform-origin:0 28.84px;transform:scale(0.8882,1.163)">$</div>
<div class="t" style="left:1965.28px;top:416.16px;transform:scaleX(1.0497)">-</div>
<div class="t" style="left:2031.21px;top:417.16px;transform-origin:0 28.84px;transform:scale(0.8882,1.163)">$</div>
<div class="t" style="left:2064.28px;top:416.16px;transform:scaleX(1.0497)">-</div>
<div class="t" style="left:2268.21px;top:417.16px;transform-origin:0 28.84px;transform:scale(0.8882,1.163)">$</div>
<div class="t" style="left:2357.12px;top:416.16px;transform:scaleX(0.9871)">338.76</div>
<div class="t" style="left:8.99px;top:453.16px;transform:scaleX(0.9438)">B4</div>
<div class="t" style="left:43.93px;top:453.16px;transform:scaleX(0.9298)">4x1C</div>
<div class="t" style="left:105.23px;top:453.16px;transform:scaleX(1.0170)">50mm</div>
<div class="t" style="left:182.75px;top:453.16px;transform:scaleX(0.8977)">CU</div>
<div class="t" style="left:221.62px;top:453.16px;transform:scaleX(0.9329)">XLPE/PVC+16mmE(MSB</div>
<div class="t" style="left:498.80px;top:453.16px;transform:scaleX(0.9289)">TO</div>
<div class="t" style="left:537.91px;top:453.16px;transform:scaleX(0.9523)">DB-D-1)</div>
<div class="t" style="left:633.38px;top:453.16px;transform:scaleX(1.0594)">(Multiplied</div>
<div class="t" style="left:763.31px;top:453.16px;transform:scaleX(1.0109)">by</div>
<div class="t" style="left:796.88px;top:453.16px;transform:scaleX(1.0310)">4</div>
<div class="t" style="left:816.92px;top:453.16px;transform:scaleX(1.1350)">for</div>
<div class="t" style="left:856.87px;top:453.16px;transform:scaleX(0.9869)">cable</div>
<div class="t" style="left:923.25px;top:453.16px;transform:scaleX(1.0236)">length)</div>
<div class="t" style="left:1230.34px;top:453.16px;transform:scaleX(0.9861)">388.2</div>
<div class="t" style="left:1373.41px;top:453.16px;transform:scaleX(1.1357)">M</div>
<div class="t" style="left:1476.23px;top:453.16px;transform:scaleX(0.9962)">0.08</div>
<div class="t" style="left:1593.34px;top:453.16px;transform:scaleX(0.9871)">31.056</div>
<div class="t" style="left:1744.79px;top:454.16px;transform-origin:0 28.84px;transform:scale(0.8882,1.163)">$</div>
<div class="t" style="left:1758.26px;top:453.16px;transform:scaleX(0.9897)">582.30</div>
<div class="t" style="left:1902.21px;top:454.16px;transform-origin:0 28.84px;transform:scale(0.8882,1.163)">$</div>
<div class="t" style="left:1965.28px;top:453.16px;transform:scaleX(1.0497)">-</div>
<div class="t" style="left:2031.21px;top:454.16px;transform-origin:0 28.84px;transform:scale(0.8882,1.163)">$</div>
<div class="t" style="left:2064.28px;top:453.16px;transform:scaleX(1.0497)">-</div>
<div class="t" style="left:2268.21px;top:454.16px;transform-origin:0 28.84px;transform:scale(0.8882,1.163)">$</div>
<div class="t" style="left:2356.79px;top:453.16px;transform:scaleX(0.9897)">582.30</div>
<div class="t" style="left:8.99px;top:490.16px;transform:scaleX(0.9438)">B4</div>
<div class="t" style="left:44.45px;top:490.16px;transform:scaleX(1.0139)">16mm</div>
<div class="t" style="left:122.02px;top:490.16px;transform:scaleX(0.9295)">BUILDING</div>
<div class="t" style="left:240.06px;top:490.16px;transform:scaleX(0.9077)">WIRE</div>
<div class="t" style="left:1230.63px;top:490.16px;transform:scaleX(0.9708)">97.05</div>
<div class="t" style="left:1373.41px;top:490.16px;transform:scaleX(1.1357)">M</div>
<div class="t" style="left:1476.23px;top:490.16px;transform:scaleX(1.0024)">0.04</div>
<div class="t" style="left:1600.34px;top:490.16px;transform:scaleX(0.9861)">3.882</div>
<div class="t" style="left:1744.79px;top:491.16px;transform-origin:0 28.84px;transform:scale(0.8882,1.163)">$</div>
<div class="t" style="left:1758.00px;top:490.16px;transform:scaleX(0.9820)">291.15</div>
<div class="t" style="left:1902.21px;top:491.16px;transform-origin:0 28.84px;transform:scale(0.8882,1.163)">$</div>
<div class="t" style="left:1965.28px;top:490.16px;transform:scaleX(1.0497)">-</div>
<div class="t" style="left:2031.21px;top:491.16px;transform-origin:0 28.84px;transform:scale(0.8882,1.163)">$</div>
<div class="t" style="left:2064.28px;top:490.16px;transform:scaleX(1.0497)">-</div>
<div class="t" style="left:2268.21px;top:491.16px;transform-origin:0 28.84px;transform:scale(0.8882,1.163)">$</div>
<div class="t" style="left:2357.46px;top:490.16px;transform:scaleX(0.9820)">291.15</div>
<div class="t" style="left:9.06px;top:527.16px;transform:scaleX(0.9123)">B5</div>
<div class="t" style="left:44.64px;top:527.16px;transform:scaleX(0.9178)">1x4C</div>
<div class="t" style="left:105.45px;top:527.16px;transform:scaleX(1.0139)">16mm</div>
<div class="t" style="left:182.75px;top:527.16px;transform:scaleX(0.8977)">CU</div>
<div class="t" style="left:221.67px;top:527.16px;transform:scaleX(0.8396)">XLPE</div>
<div class="t" style="left:282.84px;top:527.16px;transform:scaleX(0.9558)">/PVC+6mmE(MSB</div>
<div class="t" style="left:490.80px;top:527.16px;transform:scaleX(0.9289)">TO</div>
<div class="t" style="left:529.95px;top:527.16px;transform:scaleX(0.9335)">DB-E-1)</div>
<div class="t" style="left:1230.50px;top:527.16px;transform:scaleX(0.9866)">19.94</div>
<div class="t" style="left:1373.41px;top:527.16px;transform:scaleX(1.1357)">M</div>
<div class="t" style="left:1476.23px;top:527.16px;transform:scaleX(0.9962)">0.18</div>
<div class="t" style="left:1593.34px;top:527.16px;transform:scaleX(0.9863)">3.5892</div>
<div class="t" style="left:1744.79px;top:528.16px;transform-origin:0 28.84px;transform:scale(0.8882,1.163)">$</div>
<div class="t" style="left:1757.98px;top:527.16px;transform:scaleX(0.9930)">269.19</div>
<div class="t" style="left:1902.21px;top:528.16px;transform-origin:0 28.84px;transform:scale(0.8882,1.163)">$</div>
<div class="t" style="left:1965.28px;top:527.16px;transform:scaleX(1.0497)">-</div>
<div class="t" style="left:2031.21px;top:528.16px;transform-origin:0 28.84px;transform:scale(0.8882,1.163)">$</div>
<div class="t" style="left:2064.28px;top:527.16px;transform:scaleX(1.0497)">-</div>
<div class="t" style="left:2268.21px;top:528.16px;transform-origin:0 28.84px;transform:scale(0.8882,1.163)">$</div>
<div class="t" style="left:2356.75px;top:527.16px;transform:scaleX(0.9930)">269.19</div>
<div class="t" style="left:9.01px;top:564.16px;transform:scaleX(0.9383)">B6</div>
<div class="t" style="left:43.93px;top:564.16px;transform:scaleX(0.9298)">4x1C</div>
<div class="t" style="left:104.95px;top:564.16px;transform:scaleX(1.0211)">25mm</div>
<div class="t" style="left:182.75px;top:564.16px;transform:scaleX(0.8977)">CU</div>
<div class="t" style="left:221.62px;top:564.16px;transform:scaleX(0.9329)">XLPE/PVC+10mmE(MSB</div>
<div class="t" style="left:498.80px;top:564.16px;transform:scaleX(0.9289)">TO</div>
<div class="t" style="left:538.36px;top:564.16px;transform:scaleX(0.9178)">MSSB-A)</div>
<div class="t" style="left:642.38px;top:564.16px;transform:scaleX(1.0594)">(Multiplied</div>
<div class="t" style="left:772.31px;top:564.16px;transform:scaleX(1.0109)">by</div>
<div class="t" style="left:805.88px;top:564.16px;transform:scaleX(1.0310)">4</div>
<div class="t" style="left:825.92px;top:564.16px;transform:scaleX(1.1350)">for</div>
<div class="t" style="left:865.87px;top:564.16px;transform:scaleX(0.9869)">cable</div>
<div class="t" style="left:932.25px;top:564.16px;transform:scaleX(1.0236)">length)</div>
<div class="t" style="left:1229.97px;top:564.16px;transform:scaleX(0.9920)">601.2</div>
<div class="t" style="left:1373.41px;top:564.16px;transform:scaleX(1.1357)">M</div>
<div class="t" style="left:1476.23px;top:564.16px;transform:scaleX(0.9962)">0.18</div>
<div class="t" style="left:1586.51px;top:564.16px;transform:scaleX(0.9853)">108.216</div>
<div class="t" style="left:1734.29px;top:565.16px;transform-origin:0 28.84px;transform:scale(0.8882,1.163)">$</div>
<div class="t" style="left:1747.50px;top:564.16px;transform:scaleX(0.9832)">2,029.05</div>
<div class="t" style="left:1902.21px;top:565.16px;transform-origin:0 28.84px;transform:scale(0.8882,1.163)">$</div>
<div class="t" style="left:1965.28px;top:564.16px;transform:scaleX(1.0497)">-</div>
<div class="t" style="left:2031.21px;top:565.16px;transform-origin:0 28.84px;transform:scale(0.8882,1.163)">$</div>
<div class="t" style="left:2064.28px;top:564.16px;transform:scaleX(1.0497)">-</div>
<div class="t" style="left:2268.21px;top:565.16px;transform-origin:0 28.84px;transform:scale(0.8882,1.163)">$</div>
<div class="t" style="left:2336.46px;top:564.16px;transform:scaleX(0.9832)">2,029.05</div>
<div class="t" style="left:9.01px;top:601.16px;transform:scaleX(0.9383)">B6</div>
<div class="t" style="left:43.92px;top:601.16px;transform:scaleX(1.0303)">6mm</div>
<div class="t" style="left:108.02px;top:601.16px;transform:scaleX(0.9295)">BUILDING</div>
<div class="t" style="left:226.06px;top:601.16px;transform:scaleX(0.9077)">WIRE</div>
<div class="t" style="left:1230.51px;top:601.16px;transform:scaleX(0.9828)">150.3</div>
<div class="t" style="left:1373.41px;top:601.16px;transform:scaleX(1.1357)">M</div>
<div class="t" style="left:1476.23px;top:601.16px;transform:scaleX(1.0024)">0.04</div>
<div class="t" style="left:1599.97px;top:601.16px;transform:scaleX(0.9920)">6.012</div>
<div class="t" style="left:1744.79px;top:602.16px;transform-origin:0 28.84px;transform:scale(0.8882,1.163)">$</div>
<div class="t" style="left:1757.90px;top:601.16px;transform:scaleX(0.9944)">450.90</div>
<div class="t" style="left:1902.21px;top:602.16px;transform-origin:0 28.84px;transform:scale(0.8882,1.163)">$</div>
<div class="t" style="left:1965.28px;top:601.16px;transform:scaleX(1.0497)">-</div>
<div class="t" style="left:2031.21px;top:602.16px;transform-origin:0 28.84px;transform:scale(0.8882,1.163)">$</div>
<div class="t" style="left:2064.28px;top:601.16px;transform:scaleX(1.0497)">-</div>
<div class="t" style="left:2268.21px;top:602.16px;transform-origin:0 28.84px;transform:scale(0.8882,1.163)">$</div>
<div class="t" style="left:2356.43px;top:601.16px;transform:scaleX(0.9944)">450.90</div>
<div class="t" style="left:8.99px;top:638.16px;transform:scaleX(0.9462)">B7</div>
<div class="t" style="left:44.64px;top:638.16px;transform:scaleX(0.9178)">1x4C</div>
<div class="t" style="left:105.31px;top:638.16px;transform:scaleX(1.0159)">35mm</div>
<div class="t" style="left:182.75px;top:638.16px;transform:scaleX(0.8977)">CU</div>
<div class="t" style="left:221.62px;top:638.16px;transform:scaleX(0.9329)">XLPE/PVC+10mmE(MSB</div>
<div class="t" style="left:498.80px;top:638.16px;transform:scaleX(0.9289)">TO</div>
<div class="t" style="left:538.38px;top:638.16px;transform:scaleX(0.9081)">MSSB-B)</div>
<div class="t" style="left:1223.50px;top:638.16px;transform:scaleX(0.9880)">106.77</div>
<div class="t" style="left:1373.41px;top:638.16px;transform:scaleX(1.1357)">M</div>
<div class="t" style="left:1476.23px;top:638.16px;transform:scaleX(0.9976)">0.23</div>
<div class="t" style="left:1585.99px;top:638.16px;transform:scaleX(0.9892)">24.5571</div>
<div class="t" style="left:1734.29px;top:639.16px;transform-origin:0 28.84px;transform:scale(0.8882,1.163)">$</div>
<div class="t" style="left:1748.01px;top:638.16px;transform:scaleX(0.9838)">1,841.78</div>
<div class="t" style="left:1902.21px;top:639.16px;transform-origin:0 28.84px;transform:scale(0.8882,1.163)">$</div>
<div class="t" style="left:1965.28px;top:638.16px;transform:scaleX(1.0497)">-</div>
<div class="t" style="left:2031.21px;top:639.16px;transform-origin:0 28.84px;transform:scale(0.8882,1.163)">$</div>
<div class="t" style="left:2064.28px;top:638.16px;transform:scaleX(1.0497)">-</div>
<div class="t" style="left:2268.21px;top:639.16px;transform-origin:0 28.84px;transform:scale(0.8882,1.163)">$</div>
<div class="t" style="left:2336.44px;top:638.16px;transform:scaleX(0.9838)">1,841.78</div>
<div class="t" style="left:9.02px;top:675.16px;transform:scaleX(0.9325)">B8</div>
<div class="t" style="left:43.93px;top:675.16px;transform:scaleX(0.9298)">4x1C</div>
<div class="t" style="left:105.23px;top:675.16px;transform:scaleX(1.0170)">50mm</div>
<div class="t" style="left:182.75px;top:675.16px;transform:scaleX(0.8977)">CU</div>
<div class="t" style="left:221.62px;top:675.16px;transform:scaleX(0.9329)">XLPE/PVC+16mmE(MSB</div>
<div class="t" style="left:498.80px;top:675.16px;transform:scaleX(0.9289)">TO</div>
<div class="t" style="left:538.41px;top:675.16px;transform:scaleX(0.8958)">MSSB-C)</div>
<div class="t" style="left:641.38px;top:675.16px;transform:scaleX(1.0594)">(Multiplied</div>
<div class="t" style="left:771.31px;top:675.16px;transform:scaleX(1.0109)">by</div>
<div class="t" style="left:804.88px;top:675.16px;transform:scaleX(1.0310)">4</div>
<div class="t" style="left:824.92px;top:675.16px;transform:scaleX(1.1350)">for</div>
<div class="t" style="left:864.87px;top:675.16px;transform:scaleX(0.9869)">cable</div>
<div class="t" style="left:931.25px;top:675.16px;transform:scaleX(1.0236)">length)</div>
<div class="t" style="left:1223.26px;top:675.16px;transform:scaleX(0.9899)">526.64</div>
<div class="t" style="left:1373.41px;top:675.16px;transform:scaleX(1.1357)">M</div>
<div class="t" style="left:1476.23px;top:675.16px;transform:scaleX(0.9962)">0.08</div>
<div class="t" style="left:1585.90px;top:675.16px;transform:scaleX(0.9913)">42.1312</div>
<div class="t" style="left:1744.79px;top:676.16px;transform-origin:0 28.84px;transform:scale(0.8882,1.163)">$</div>
<div class="t" style="left:1758.04px;top:675.16px;transform:scaleX(0.9909)">789.96</div>
<div class="t" style="left:1902.21px;top:676.16px;transform-origin:0 28.84px;transform:scale(0.8882,1.163)">$</div>
<div class="t" style="left:1965.28px;top:675.16px;transform:scaleX(1.0497)">-</div>
<div class="t" style="left:2031.21px;top:676.16px;transform-origin:0 28.84px;transform:scale(0.8882,1.163)">$</div>
<div class="t" style="left:2064.28px;top:675.16px;transform:scaleX(1.0497)">-</div>
<div class="t" style="left:2268.21px;top:676.16px;transform-origin:0 28.84px;transform:scale(0.8882,1.163)">$</div>
<div class="t" style="left:2356.82px;top:675.16px;transform:scaleX(0.9909)">789.96</div>
<div class="t" style="left:9.02px;top:712.16px;transform:scaleX(0.9325)">B8</div>
<div class="t" style="left:44.45px;top:712.16px;transform:scaleX(1.0139)">16mm</div>
<div class="t" style="left:122.02px;top:712.16px;transform:scaleX(0.9295)">BUILDING</div>
<div class="t" style="left:240.06px;top:712.16px;transform:scaleX(0.9077)">WIRE</div>
<div class="t" style="left:1223.51px;top:712.16px;transform:scaleX(0.9849)">131.66</div>
<div class="t" style="left:1373.41px;top:712.16px;transform:scaleX(1.1357)">M</div>
<div class="t" style="left:1476.23px;top:712.16px;transform:scaleX(1.0024)">0.04</div>
<div class="t" style="left:1593.26px;top:712.16px;transform:scaleX(0.9899)">5.2664</div>
<div class="t" style="left:1744.79px;top:713.16px;transform-origin:0 28.84px;transform:scale(0.8882,1.163)">$</div>
<div class="t" style="left:1758.34px;top:712.16px;transform:scaleX(0.9849)">394.98</div>
<div class="t" style="left:1902.21px;top:713.16px;transform-origin:0 28.84px;transform:scale(0.8882,1.163)">$</div>
<div class="t" style="left:1965.28px;top:712.16px;transform:scaleX(1.0497)">-</div>
<div class="t" style="left:2031.21px;top:713.16px;transform-origin:0 28.84px;transform:scale(0.8882,1.163)">$</div>
<div class="t" style="left:2064.28px;top:712.16px;transform:scaleX(1.0497)">-</div>
<div class="t" style="left:2268.21px;top:713.16px;transform-origin:0 28.84px;transform:scale(0.8882,1.163)">$</div>
<div class="t" style="left:2357.27px;top:712.16px;transform:scaleX(0.9849)">394.98</div>
<div class="t" style="left:9.00px;top:749.16px;transform:scaleX(0.9417)">B9</div>
<div class="t" style="left:44.64px;top:749.16px;transform:scaleX(0.9178)">1x4C</div>
<div class="t" style="left:105.31px;top:749.16px;transform:scaleX(1.0159)">35mm</div>
<div class="t" style="left:182.75px;top:749.16px;transform:scaleX(0.8977)">CU</div>
<div class="t" style="left:221.62px;top:749.16px;transform:scaleX(0.9329)">XLPE/PVC+10mmE(MSB</div>
<div class="t" style="left:498.80px;top:749.16px;transform:scaleX(0.9289)">TO</div>
<div class="t" style="left:538.37px;top:749.16px;transform:scaleX(0.9150)">MSSB-D)</div>
<div class="t" style="left:1223.51px;top:749.16px;transform:scaleX(0.9836)">115.13</div>
<div class="t" style="left:1373.41px;top:749.16px;transform:scaleX(1.1357)">M</div>
<div class="t" style="left:1476.23px;top:749.16px;transform:scaleX(0.9976)">0.23</div>
<div class="t" style="left:1585.99px;top:749.16px;transform:scaleX(0.9921)">26.4799</div>
<div class="t" style="left:1734.29px;top:750.16px;transform-origin:0 28.84px;transform:scale(0.8882,1.163)">$</div>
<div class="t" style="left:1748.00px;top:749.16px;transform:scaleX(0.9865)">1,985.99</div>
<div class="t" style="left:1902.21px;top:750.16px;transform-origin:0 28.84px;transform:scale(0.8882,1.163)">$</div>
<div class="t" style="left:1965.28px;top:749.16px;transform:scaleX(1.0497)">-</div>
<div class="t" style="left:2031.21px;top:750.16px;transform-origin:0 28.84px;transform:scale(0.8882,1.163)">$</div>
<div class="t" style="left:2064.28px;top:749.16px;transform:scaleX(1.0497)">-</div>
<div class="t" style="left:2268.21px;top:750.16px;transform-origin:0 28.84px;transform:scale(0.8882,1.163)">$</div>
<div class="t" style="left:2336.27px;top:749.16px;transform:scaleX(0.9865)">1,985.99</div>
<div class="t" style="left:8.97px;top:786.16px;transform:scaleX(0.9578)">B10</div>
<div class="t" style="left:58.64px;top:786.16px;transform:scaleX(0.9178)">1x4C</div>
<div class="t" style="left:119.45px;top:786.16px;transform:scaleX(1.0139)">16mm</div>
<div class="t" style="left:196.75px;top:786.16px;transform:scaleX(0.8977)">CU</div>
<div class="t" style="left:235.67px;top:786.16px;transform:scaleX(0.8396)">XLPE</div>
<div class="t" style="left:296.84px;top:786.16px;transform:scaleX(0.9558)">/PVC+6mmE(MSB</div>
<div class="t" style="left:504.80px;top:786.16px;transform:scaleX(0.9289)">TO</div>
<div class="t" style="left:544.40px;top:786.16px;transform:scaleX(0.8983)">MSSB-E)</div>
<div class="t" style="left:1230.34px;top:786.16px;transform:scaleX(0.9855)">34.93</div>
<div class="t" style="left:1373.41px;top:786.16px;transform:scaleX(1.1357)">M</div>
<div class="t" style="left:1476.23px;top:786.16px;transform:scaleX(0.9962)">0.18</div>
<div class="t" style="left:1592.97px;top:786.16px;transform:scaleX(0.9936)">6.2874</div>
<div class="t" style="left:1744.79px;top:787.16px;transform-origin:0 28.84px;transform:scale(0.8882,1.163)">$</div>
<div class="t" style="left:1757.90px;top:786.16px;transform:scaleX(0.9928)">471.56</div>
<div class="t" style="left:1902.21px;top:787.16px;transform-origin:0 28.84px;transform:scale(0.8882,1.163)">$</div>
<div class="t" style="left:1965.28px;top:786.16px;transform:scaleX(1.0497)">-</div>
<div class="t" style="left:2031.21px;top:787.16px;transform-origin:0 28.84px;transform:scale(0.8882,1.163)">$</div>
<div class="t" style="left:2064.28px;top:786.16px;transform:scaleX(1.0497)">-</div>
<div class="t" style="left:2268.21px;top:787.16px;transform-origin:0 28.84px;transform:scale(0.8882,1.163)">$</div>
<div class="t" style="left:2356.68px;top:786.16px;transform:scaleX(0.9928)">471.56</div>
<div class="t" style="left:8.75px;top:823.16px;transform:scaleX(0.8989)">C1</div>
<div class="t" style="left:44.64px;top:823.16px;transform:scaleX(0.9178)">1x4C</div>
<div class="t" style="left:105.45px;top:823.16px;transform:scaleX(1.0139)">16mm</div>
<div class="t" style="left:182.75px;top:823.16px;transform:scaleX(0.8977)">CU</div>
<div class="t" style="left:221.67px;top:823.16px;transform:scaleX(0.8396)">XLPE</div>
<div class="t" style="left:283.56px;top:823.16px;transform:scaleX(0.9578)">110/PVC</div>
<div class="t" style="left:387.57px;top:823.16px;transform:scaleX(0.9367)">(MSB</div>
<div class="t" style="left:452.80px;top:823.16px;transform:scaleX(0.9289)">TO</div>
<div class="t" style="left:492.00px;top:823.16px;transform:scaleX(0.9038)">LIFT1)</div>
<div class="t" style="left:1237.62px;top:823.16px;transform:scaleX(0.9793)">97.3</div>
<div class="t" style="left:1373.41px;top:823.16px;transform:scaleX(1.1357)">M</div>
<div class="t" style="left:1476.23px;top:823.16px;transform:scaleX(0.9962)">0.18</div>
<div class="t" style="left:1593.50px;top:823.16px;transform:scaleX(0.9867)">17.514</div>
<div class="t" style="left:1734.29px;top:824.16px;transform-origin:0 28.84px;transform:scale(0.8882,1.163)">$</div>
<div class="t" style="left:1748.02px;top:823.16px;transform:scaleX(0.9779)">1,313.55</div>
<div class="t" style="left:1902.21px;top:824.16px;transform-origin:0 28.84px;transform:scale(0.8882,1.163)">$</div>
<div class="t" style="left:1965.28px;top:823.16px;transform:scaleX(1.0497)">-</div>
<div class="t" style="left:2031.21px;top:824.16px;transform-origin:0 28.84px;transform:scale(0.8882,1.163)">$</div>
<div class="t" style="left:2064.28px;top:823.16px;transform:scaleX(1.0497)">-</div>
<div class="t" style="left:2268.21px;top:824.16px;transform-origin:0 28.84px;transform:scale(0.8882,1.163)">$</div>
<div class="t" style="left:2336.98px;top:823.16px;transform:scaleX(0.9779)">1,313.55</div>
<div class="t" style="left:8.75px;top:860.16px;transform:scaleX(0.9023)">C2</div>
<div class="t" style="left:44.64px;top:860.16px;transform:scaleX(0.9178)">1x4C</div>
<div class="t" style="left:105.45px;top:860.16px;transform:scaleX(1.0139)">16mm</div>
<div class="t" style="left:182.75px;top:860.16px;transform:scaleX(0.8977)">CU</div>
<div class="t" style="left:221.67px;top:860.16px;transform:scaleX(0.8396)">XLPE</div>
<div class="t" style="left:283.56px;top:860.16px;transform:scaleX(0.9578)">110/PVC</div>
<div class="t" style="left:387.57px;top:860.16px;transform:scaleX(0.9367)">(MSB</div>
<div class="t" style="left:452.80px;top:860.16px;transform:scaleX(0.9289)">TO</div>
<div class="t" style="left:492.15px;top:860.16px;transform:scaleX(0.8308)">FIRE</div>
<div class="t" style="left:547.13px;top:860.16px;transform:scaleX(0.8799)">BOOSTER</div>
<div class="t" style="left:662.03px;top:860.16px;transform:scaleX(0.9482)">PUMP)</div>
<div class="t" style="left:1223.51px;top:860.16px;transform:scaleX(0.9827)">124.91</div>
<div class="t" style="left:1373.41px;top:860.16px;transform:scaleX(1.1357)">M</div>
<div class="t" style="left:1476.23px;top:860.16px;transform:scaleX(0.9962)">0.18</div>
<div class="t" style="left:1585.99px;top:860.16px;transform:scaleX(0.9892)">22.4838</div>
<div class="t" style="left:1734.29px;top:861.16px;transform-origin:0 28.84px;transform:scale(0.8882,1.163)">$</div>
<div class="t" style="left:1748.00px;top:860.16px;transform:scaleX(0.9865)">1,686.29</div>
<div class="t" style="left:1902.21px;top:861.16px;transform-origin:0 28.84px;transform:scale(0.8882,1.163)">$</div>
<div class="t" style="left:1965.28px;top:860.16px;transform:scaleX(1.0497)">-</div>
<div class="t" style="left:2031.21px;top:861.16px;transform-origin:0 28.84px;transform:scale(0.8882,1.163)">$</div>
<div class="t" style="left:2064.28px;top:860.16px;transform:scaleX(1.0497)">-</div>
<div class="t" style="left:2268.21px;top:861.16px;transform-origin:0 28.84px;transform:scale(0.8882,1.163)">$</div>
<div class="t" style="left:2336.27px;top:860.16px;transform:scaleX(0.9865)">1,686.29</div>
<div class="t" style="left:8.75px;top:897.16px;transform:scaleX(0.9015)">C3</div>
<div class="t" style="left:44.64px;top:897.16px;transform:scaleX(0.9178)">1x4C</div>
<div class="t" style="left:105.45px;top:897.16px;transform:scaleX(1.0139)">16mm</div>
<div class="t" style="left:182.75px;top:897.16px;transform:scaleX(0.8977)">CU</div>
<div class="t" style="left:221.67px;top:897.16px;transform:scaleX(0.8396)">XLPE</div>
<div class="t" style="left:283.56px;top:897.16px;transform:scaleX(0.9578)">110/PVC</div>
<div class="t" style="left:387.57px;top:897.16px;transform:scaleX(0.9367)">(MSB</div>
<div class="t" style="left:452.80px;top:897.16px;transform:scaleX(0.9289)">TO</div>
<div class="t" style="left:492.07px;top:897.16px;transform:scaleX(0.8666)">FIP)</div>
<div class="t" style="left:1223.51px;top:897.16px;transform:scaleX(0.9841)">142.22</div>
<div class="t" style="left:1373.41px;top:897.16px;transform:scaleX(1.1357)">M</div>
<div class="t" style="left:1476.23px;top:897.16px;transform:scaleX(0.9962)">0.18</div>
<div class="t" style="left:1585.99px;top:897.16px;transform:scaleX(0.9910)">25.5996</div>
<div class="t" style="left:1734.29px;top:898.16px;transform-origin:0 28.84px;transform:scale(0.8882,1.163)">$</div>
<div class="t" style="left:1748.00px;top:897.16px;transform:scaleX(0.9879)">1,919.97</div>
<div class="t" style="left:1902.21px;top:898.16px;transform-origin:0 28.84px;transform:scale(0.8882,1.163)">$</div>
<div class="t" style="left:1965.28px;top:897.16px;transform:scaleX(1.0497)">-</div>
<div class="t" style="left:2031.21px;top:898.16px;transform-origin:0 28.84px;transform:scale(0.8882,1.163)">$</div>
<div class="t" style="left:2064.28px;top:897.16px;transform:scaleX(1.0497)">-</div>
<div class="t" style="left:2268.21px;top:898.16px;transform-origin:0 28.84px;transform:scale(0.8882,1.163)">$</div>
<div class="t" style="left:2336.21px;top:897.16px;transform:scaleX(0.9879)">1,919.97</div>
<div class="t" style="left:8.90px;top:934.16px;transform:scaleX(0.9581)">D1</div>
<div class="t" style="left:46.64px;top:934.16px;transform:scaleX(0.9178)">1x4C</div>
<div class="t" style="left:107.45px;top:934.16px;transform:scaleX(1.0139)">16mm</div>
<div class="t" style="left:184.75px;top:934.16px;transform:scaleX(0.8977)">CU</div>
<div class="t" style="left:223.67px;top:934.16px;transform:scaleX(0.8396)">XLPE</div>
<div class="t" style="left:284.84px;top:934.16px;transform:scaleX(0.9546)">/PVC+6mmE(</div>
<div class="t" style="left:440.92px;top:934.16px;transform:scaleX(0.9473)">DB-B-1</div>
<div class="t" style="left:525.80px;top:934.16px;transform:scaleX(0.9289)">TO</div>
<div class="t" style="left:565.06px;top:934.16px;transform:scaleX(0.9337)">PV-1)</div>
<div class="t" style="left:1229.90px;top:934.16px;transform:scaleX(0.9932)">40.02</div>
<div class="t" style="left:1373.41px;top:934.16px;transform:scaleX(1.1357)">M</div>
<div class="t" style="left:1476.23px;top:934.16px;transform:scaleX(0.9962)">0.18</div>
<div class="t" style="left:1593.04px;top:934.16px;transform:scaleX(0.9909)">7.2036</div>
<div class="t" style="left:1744.79px;top:935.16px;transform-origin:0 28.84px;transform:scale(0.8882,1.163)">$</div>
<div class="t" style="left:1758.26px;top:934.16px;transform:scaleX(0.9911)">540.27</div>
<div class="t" style="left:1902.21px;top:935.16px;transform-origin:0 28.84px;transform:scale(0.8882,1.163)">$</div>
<div class="t" style="left:1965.28px;top:934.16px;transform:scaleX(1.0497)">-</div>
<div class="t" style="left:2031.21px;top:935.16px;transform-origin:0 28.84px;transform:scale(0.8882,1.163)">$</div>
<div class="t" style="left:2064.28px;top:934.16px;transform:scaleX(1.0497)">-</div>
<div class="t" style="left:2268.21px;top:935.16px;transform-origin:0 28.84px;transform:scale(0.8882,1.163)">$</div>
<div class="t" style="left:2356.97px;top:934.16px;transform:scaleX(0.9911)">540.27</div>
<div class="t" style="left:8.89px;top:971.16px;transform:scaleX(0.9616)">D2</div>
<div class="t" style="left:46.64px;top:971.16px;transform:scaleX(0.9178)">1x4C</div>
<div class="t" style="left:107.45px;top:971.16px;transform:scaleX(1.0139)">16mm</div>
<div class="t" style="left:184.75px;top:971.16px;transform:scaleX(0.8977)">CU</div>
<div class="t" style="left:223.67px;top:971.16px;transform:scaleX(0.8396)">XLPE</div>
<div class="t" style="left:284.84px;top:971.16px;transform:scaleX(0.9546)">/PVC+6mmE(</div>
<div class="t" style="left:440.90px;top:971.16px;transform:scaleX(0.9555)">DB-D-1</div>
<div class="t" style="left:527.80px;top:971.16px;transform:scaleX(0.9289)">TO</div>
<div class="t" style="left:567.06px;top:971.16px;transform:scaleX(0.9337)">PV-2)</div>
<div class="t" style="left:1230.26px;top:971.16px;transform:scaleX(0.9867)">54.33</div>
<div class="t" style="left:1373.41px;top:971.16px;transform:scaleX(1.1357)">M</div>
<div class="t" style="left:1476.23px;top:971.16px;transform:scaleX(0.9962)">0.18</div>
<div class="t" style="left:1593.61px;top:971.16px;transform:scaleX(0.9853)">9.7794</div>
<div class="t" style="left:1744.79px;top:972.16px;transform-origin:0 28.84px;transform:scale(0.8882,1.163)">$</div>
<div class="t" style="left:1758.04px;top:971.16px;transform:scaleX(0.9909)">733.46</div>
<div class="t" style="left:1902.21px;top:972.16px;transform-origin:0 28.84px;transform:scale(0.8882,1.163)">$</div>
<div class="t" style="left:1965.28px;top:971.16px;transform:scaleX(1.0497)">-</div>
<div class="t" style="left:2031.21px;top:972.16px;transform-origin:0 28.84px;transform:scale(0.8882,1.163)">$</div>
<div class="t" style="left:2064.28px;top:971.16px;transform:scaleX(1.0497)">-</div>
<div class="t" style="left:2268.21px;top:972.16px;transform-origin:0 28.84px;transform:scale(0.8882,1.163)">$</div>
<div class="t" style="left:2356.82px;top:971.16px;transform:scaleX(0.9909)">733.46</div>
<div class="t" style="left:9.02px;top:1052.16px;transform:scaleX(0.9322)">B1</div>
<div class="t" style="left:43.84px;top:1052.16px;transform:scaleX(1.0497)">-</div>
<div class="t" style="left:59.03px;top:1052.16px;transform:scaleX(0.9463)">Rod</div>
<div class="t" style="left:110.25px;top:1052.16px;transform:scaleX(0.9948)">suspended</div>
<div class="t" style="left:240.87px;top:1052.16px;transform:scaleX(1.0618)">direct</div>
<div class="t" style="left:312.91px;top:1052.16px;transform:scaleX(1.0322)">extrusion</div>
<div class="t" style="left:1240.39px;top:1052.16px;transform:scaleX(1.0006)">430</div>
<div class="t" style="left:1368.91px;top:1052.16px;transform:scaleX(1.0096)">No</div>
<div class="t" style="left:1476.23px;top:1052.16px;transform:scaleX(0.9984)">0.32</div>
<div class="t" style="left:1600.51px;top:1052.16px;transform:scaleX(0.9844)">137.6</div>
<div class="t" style="left:1727.29px;top:1053.16px;transform-origin:0 28.84px;transform:scale(0.8882,1.163)">$</div>
<div class="t" style="left:1741.00px;top:1052.16px;transform:scaleX(0.9868)">10,320.00</div>
<div class="t" style="left:1902.21px;top:1053.16px;transform-origin:0 28.84px;transform:scale(0.8882,1.163)">$</div>
<div class="t" style="left:1965.28px;top:1052.16px;transform:scaleX(1.0497)">-</div>
<div class="t" style="left:2031.21px;top:1053.16px;transform-origin:0 28.84px;transform:scale(0.8882,1.163)">$</div>
<div class="t" style="left:2064.28px;top:1052.16px;transform:scaleX(1.0497)">-</div>
<div class="t" style="left:2268.21px;top:1053.16px;transform-origin:0 28.84px;transform:scale(0.8882,1.163)">$</div>
<div class="t" style="left:2322.04px;top:1052.16px;transform:scaleX(0.9868)">10,320.00</div>
<div class="t" style="left:9.01px;top:1089.16px;transform:scaleX(0.9349)">B3</div>
<div class="t" style="left:49.84px;top:1089.16px;transform:scaleX(1.0497)">-</div>
<div class="t" style="left:65.03px;top:1089.16px;transform:scaleX(0.9463)">Rod</div>
<div class="t" style="left:116.25px;top:1089.16px;transform:scaleX(0.9948)">suspended</div>
<div class="t" style="left:246.69px;top:1089.16px;transform:scaleX(1.0628)">in-direct</div>
<div class="t" style="left:348.91px;top:1089.16px;transform:scaleX(1.0322)">extrusion</div>
<div class="t" style="left:1248.03px;top:1089.16px;transform:scaleX(0.9738)">18</div>
<div class="t" style="left:1368.91px;top:1089.16px;transform:scaleX(1.0096)">No</div>
<div class="t" style="left:1476.23px;top:1089.16px;transform:scaleX(0.9984)">0.32</div>
<div class="t" style="left:1607.26px;top:1089.16px;transform:scaleX(0.9886)">5.76</div>
<div class="t" style="left:1744.79px;top:1090.16px;transform-origin:0 28.84px;transform:scale(0.8882,1.163)">$</div>
<div class="t" style="left:1757.90px;top:1089.16px;transform:scaleX(0.9944)">432.00</div>
<div class="t" style="left:1902.21px;top:1090.16px;transform-origin:0 28.84px;transform:scale(0.8882,1.163)">$</div>
<div class="t" style="left:1965.28px;top:1089.16px;transform:scaleX(1.0497)">-</div>
<div class="t" style="left:2031.21px;top:1090.16px;transform-origin:0 28.84px;transform:scale(0.8882,1.163)">$</div>
<div class="t" style="left:2064.28px;top:1089.16px;transform:scaleX(1.0497)">-</div>
<div class="t" style="left:2268.21px;top:1090.16px;transform-origin:0 28.84px;transform:scale(0.8882,1.163)">$</div>
<div class="t" style="left:2356.43px;top:1089.16px;transform:scaleX(0.9944)">432.00</div>
<div class="t" style="left:9.01px;top:1126.16px;transform:scaleX(0.9349)">B3</div>
<div class="t" style="left:44.02px;top:1126.16px;transform:scaleX(1.0100)">7.0m</div>
<div class="t" style="left:106.84px;top:1126.16px;transform:scaleX(1.0497)">-</div>
<div class="t" style="left:122.07px;top:1126.16px;transform:scaleX(0.9277)">Recessed</div>
<div class="t" style="left:234.03px;top:1126.16px;transform:scaleX(1.1362)">troffer</div>
<div class="t" style="left:1255.06px;top:1126.16px;transform:scaleX(0.9563)">1</div>
<div class="t" style="left:1368.91px;top:1126.16px;transform:scaleX(1.0096)">No</div>
<div class="t" style="left:1483.22px;top:1126.16px;transform:scaleX(1.0088)">0.4</div>
<div class="t" style="left:1613.72px;top:1126.16px;transform:scaleX(1.0088)">0.4</div>
<div class="t" style="left:1751.79px;top:1127.16px;transform-origin:0 28.84px;transform:scale(0.8882,1.163)">$</div>
<div class="t" style="left:1765.34px;top:1126.16px;transform:scaleX(0.9891)">30.00</div>
<div class="t" style="left:1902.21px;top:1127.16px;transform-origin:0 28.84px;transform:scale(0.8882,1.163)">$</div>
<div class="t" style="left:1965.28px;top:1126.16px;transform:scaleX(1.0497)">-</div>
<div class="t" style="left:2031.21px;top:1127.16px;transform-origin:0 28.84px;transform:scale(0.8882,1.163)">$</div>
<div class="t" style="left:2064.28px;top:1126.16px;transform:scaleX(1.0497)">-</div>
<div class="t" style="left:2268.21px;top:1127.16px;transform-origin:0 28.84px;transform:scale(0.8882,1.163)">$</div>
<div class="t" style="left:2370.87px;top:1126.16px;transform:scaleX(0.9891)">30.00</div>
<div class="t" style="left:9.06px;top:1163.16px;transform:scaleX(0.9123)">B5</div>
<div class="t" style="left:43.84px;top:1163.16px;transform:scaleX(1.0497)">-</div>
<div class="t" style="left:59.05px;top:1163.16px;transform:scaleX(1.0102)">Wall</div>
<div class="t" style="left:115.23px;top:1163.16px;transform:scaleX(1.0504)">mounted</div>
<div class="t" style="left:226.06px;top:1163.16px;transform:scaleX(0.8729)">LED</div>
<div class="t" style="left:274.85px;top:1163.16px;transform:scaleX(1.0151)">Batten</div>
<div class="t" style="left:1247.45px;top:1163.16px;transform:scaleX(1.0095)">67</div>
<div class="t" style="left:1368.91px;top:1163.16px;transform:scaleX(1.0096)">No</div>
<div class="t" style="left:1483.25px;top:1163.16px;transform:scaleX(0.9830)">0.5</div>
<div class="t" style="left:1607.36px;top:1163.16px;transform:scaleX(0.9716)">33.5</div>
<div class="t" style="left:1734.29px;top:1164.16px;transform-origin:0 28.84px;transform:scale(0.8882,1.163)">$</div>
<div class="t" style="left:1747.49px;top:1163.16px;transform:scaleX(0.9920)">2,512.50</div>
<div class="t" style="left:1902.21px;top:1164.16px;transform-origin:0 28.84px;transform:scale(0.8882,1.163)">$</div>
<div class="t" style="left:1965.28px;top:1163.16px;transform:scaleX(1.0497)">-</div>
<div class="t" style="left:2031.21px;top:1164.16px;transform-origin:0 28.84px;transform:scale(0.8882,1.163)">$</div>
<div class="t" style="left:2064.28px;top:1163.16px;transform:scaleX(1.0497)">-</div>
<div class="t" style="left:2268.21px;top:1164.16px;transform-origin:0 28.84px;transform:scale(0.8882,1.163)">$</div>
<div class="t" style="left:2335.52px;top:1163.16px;transform:scaleX(0.9920)">2,512.50</div>
<div class="t" style="left:8.91px;top:1200.16px;transform:scaleX(0.9885)">EM</div>
<div class="t" style="left:52.84px;top:1200.16px;transform:scaleX(1.0497)">-</div>
<div class="t" style="left:67.93px;top:1200.16px;transform:scaleX(0.9816)">Emergency</div>
<div class="t" style="left:1247.46px;top:1200.16px;transform:scaleX(1.0006)">66</div>
<div class="t" style="left:1368.91px;top:1200.16px;transform:scaleX(1.0096)">No</div>
<div class="t" style="left:1476.24px;top:1200.16px;transform:scaleX(0.9842)">0.45</div>
<div class="t" style="left:1606.98px;top:1200.16px;transform:scaleX(0.9993)">29.7</div>
<div class="t" style="left:1734.29px;top:1201.16px;transform-origin:0 28.84px;transform:scale(0.8882,1.163)">$</div>
<div class="t" style="left:1747.49px;top:1200.16px;transform:scaleX(0.9920)">2,227.50</div>
<div class="t" style="left:1902.21px;top:1201.16px;transform-origin:0 28.84px;transform:scale(0.8882,1.163)">$</div>
<div class="t" style="left:1965.28px;top:1200.16px;transform:scaleX(1.0497)">-</div>
<div class="t" style="left:2031.21px;top:1201.16px;transform-origin:0 28.84px;transform:scale(0.8882,1.163)">$</div>
<div class="t" style="left:2064.28px;top:1200.16px;transform:scaleX(1.0497)">-</div>
<div class="t" style="left:2268.21px;top:1201.16px;transform-origin:0 28.84px;transform:scale(0.8882,1.163)">$</div>
<div class="t" style="left:2335.52px;top:1200.16px;transform:scaleX(0.9920)">2,227.50</div>
<div class="t" style="left:8.80px;top:1237.16px;transform:scaleX(1.0433)">EM-WM</div>
<div class="t" style="left:110.84px;top:1237.16px;transform:scaleX(1.0497)">-</div>
<div class="t" style="left:125.93px;top:1237.16px;transform:scaleX(0.9816)">Emergency</div>
<div class="t" style="left:1254.85px;top:1237.16px;transform:scaleX(0.9782)">3</div>
<div class="t" style="left:1368.91px;top:1237.16px;transform:scaleX(1.0096)">No</div>
<div class="t" style="left:1476.24px;top:1237.16px;transform:scaleX(0.9842)">0.45</div>
<div class="t" style="left:1607.54px;top:1237.16px;transform:scaleX(0.9678)">1.35</div>
<div class="t" style="left:1744.79px;top:1238.16px;transform-origin:0 28.84px;transform:scale(0.8882,1.163)">$</div>
<div class="t" style="left:1758.53px;top:1237.16px;transform:scaleX(0.9751)">101.25</div>
<div class="t" style="left:1902.21px;top:1238.16px;transform-origin:0 28.84px;transform:scale(0.8882,1.163)">$</div>
<div class="t" style="left:1965.28px;top:1237.16px;transform:scaleX(1.0497)">-</div>
<div class="t" style="left:2031.21px;top:1238.16px;transform-origin:0 28.84px;transform:scale(0.8882,1.163)">$</div>
<div class="t" style="left:2064.28px;top:1237.16px;transform:scaleX(1.0497)">-</div>
<div class="t" style="left:2268.21px;top:1238.16px;transform-origin:0 28.84px;transform:scale(0.8882,1.163)">$</div>
<div class="t" style="left:2357.99px;top:1237.16px;transform:scaleX(0.9751)">101.25</div>
</body></html>
